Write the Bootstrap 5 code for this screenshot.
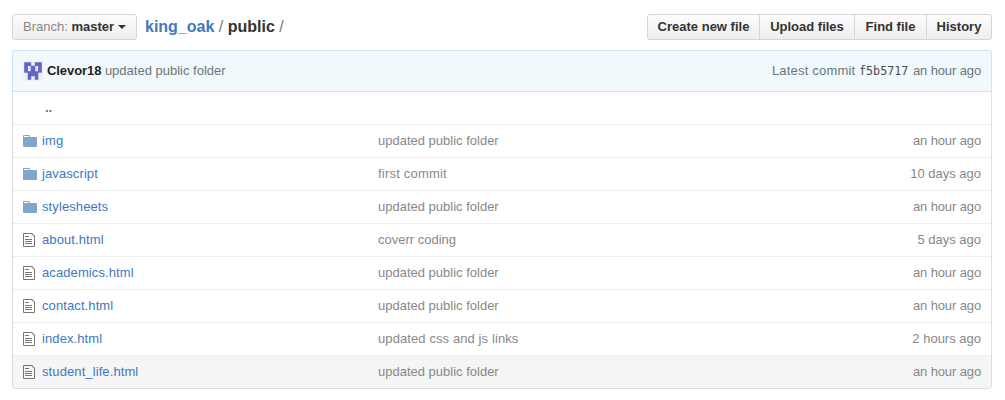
<!DOCTYPE html>
<html lang="en">
<head>
<meta charset="utf-8">
<meta name="viewport" content="width=device-width, initial-scale=1">
<title>king_oak/public</title>
<link href="https://cdn.jsdelivr.net/npm/bootstrap@5.3.0/dist/css/bootstrap.min.css" rel="stylesheet">
<style>
body{font-family:"Liberation Sans",Arial,sans-serif;font-size:13px;line-height:18px;color:#333;background:#fff}
a{color:#4078c0;text-decoration:none}
.repo{width:980px;margin:14px 0 0 12px}
.btn-gh{--bs-btn-font-size:13px;--bs-btn-font-weight:700;--bs-btn-line-height:18px;--bs-btn-padding-y:3px;--bs-btn-padding-x:10px;--bs-btn-border-radius:3px;--bs-btn-color:#333;--bs-btn-border-color:#d5d5d5;background-image:linear-gradient(#fcfcfc,#eee);height:26px;white-space:nowrap}
.btn-gh i{font-style:normal;font-weight:400;color:#888}
.btn-gh.dropdown-toggle::after{border-top-width:4px;border-left-width:4px;border-right-width:4px;margin-left:4px;vertical-align:2px}
.branch{width:125px}
.b1{width:113px}.b2{width:96px}.b3{width:73px}.b4{width:66px}
.crumb{font-size:16px;line-height:26px;margin-left:8px;color:#767676}
.crumb b{color:#333}
.files{border:1px solid #ddd;border-radius:3px;margin-top:10px}
.commit{height:42px;margin:-1px -1px 0;padding:0 10px;background:#f2f9fc;border:1px solid #c9e6f2;border-radius:3px 3px 0 0;color:#68777d}
.commit svg{margin-right:4px}
.commit b{color:#222;letter-spacing:-.08px}
.commit code{font-family:"DejaVu Sans Mono",monospace;font-size:11.7px;color:#4c4c4c;margin:0 1px 0 0}
.line{height:33px;padding:0 10px;border-top:1px solid #eee;color:#888}
.line.up{height:32px;border-top:0}
.line.hot{background:#f5f5f5;border-radius:0 0 2px 2px}
.ico{width:19px;height:16px}
.up .ico{width:22px}
.name{width:336px;letter-spacing:.1px}
.age-hour{letter-spacing:-.12px}
.wide{letter-spacing:.1px}
.first{letter-spacing:.2px}
</style>
</head>
<body>
<main class="repo">
  <div class="d-flex align-items-center">
    <button class="btn btn-gh branch dropdown-toggle"><i>Branch:</i> master</button>
    <div class="crumb"><a href="#"><strong>king_oak</strong></a> / <b>public</b> /</div>
    <div class="btn-group ms-auto">
      <button class="btn btn-gh b1 px-0">Create new file</button>
      <button class="btn btn-gh b2 px-0">Upload files</button>
      <button class="btn btn-gh b3 px-0">Find file</button>
      <button class="btn btn-gh b4 px-0">History</button>
    </div>
  </div>
  <section class="files">
    <div class="commit d-flex align-items-center">
      <svg width="20" height="20" viewBox="0 0 20 20"><rect width="20" height="20" fill="#f0f0f0"/><path fill="#6166c9" d="M1.2 1.2h7v3.5h3.6V1.2h7v10.6h-3.500v7h-3.500v-3.500H8.200v3.500H4.700v-7H1.200z"/><path fill="#e9e9f2" d="M4.900 4.900h2.800v5.400H4.900zM12.300 4.900h2.800v5.400h-2.800z"/></svg>
      <div><b>Clevor18</b> updated public folder</div>
      <div class="ms-auto"><span class="first">Latest commit</span> <code>f5b5717</code> <span class="age-hour">an hour ago</span></div>
    </div>
    <div class="line up d-flex align-items-center"><span class="ico"></span><a href="#"><b>..</b></a></div>
    <div id="rows"></div>
  </section>
</main>
<template id="folder"><svg class="ico" viewBox="0 0 19 16"><path fill="#80a6cd" fill-rule="evenodd" d="M0 3q0-1 1-1h5q1 0 1 1v1h6q1 0 1 1v8q0 1-1 1H1q-1 0-1-1zm1 0v1h5V3z"/></svg></template>
<template id="file"><svg class="ico" viewBox="0 0 19 16"><path fill="#767676" fill-rule="evenodd" d="M0 2q0-1 1-1h8l3 3v10q0 1-1 1H1q-1 0-1-1zm1 0v12h10V4.500L8.500 2zM2 4h4v1H2zm0 3h7v1H2zm0 2h7v1H2zm0 2h7v1H2z"/></svg></template>
<script>
const entries = [
  ["folder","img","updated public folder","an hour ago"],
  ["folder","javascript","first commit","10 days ago"],
  ["folder","stylesheets","updated public folder","an hour ago"],
  ["file","about.html","coverr coding","5 days ago"],
  ["file","academics.html","updated public folder","an hour ago"],
  ["file","contact.html","updated public folder","an hour ago"],
  ["file","index.html","updated css and js links","2 hours ago"],
  ["file","student_life.html","updated public folder","an hour ago"]
];
const tracking = {"an hour ago":"age-hour","first commit":"first","updated css and js links":"wide"};
document.getElementById("rows").innerHTML = entries.map(([kind, name, msg, age], i) =>
  `<div class="line d-flex align-items-center${i === entries.length - 1 ? " hot" : ""}">${document.getElementById(kind).innerHTML}<a class="name" href="#">${name}</a><span class="${tracking[msg] || ""}">${msg}</span><span class="ms-auto ${tracking[age] || ""}">${age}</span></div>`).join("");
</script>
<script src="https://cdn.jsdelivr.net/npm/bootstrap@5.3.0/dist/js/bootstrap.bundle.min.js"></script>
</body>
</html>
